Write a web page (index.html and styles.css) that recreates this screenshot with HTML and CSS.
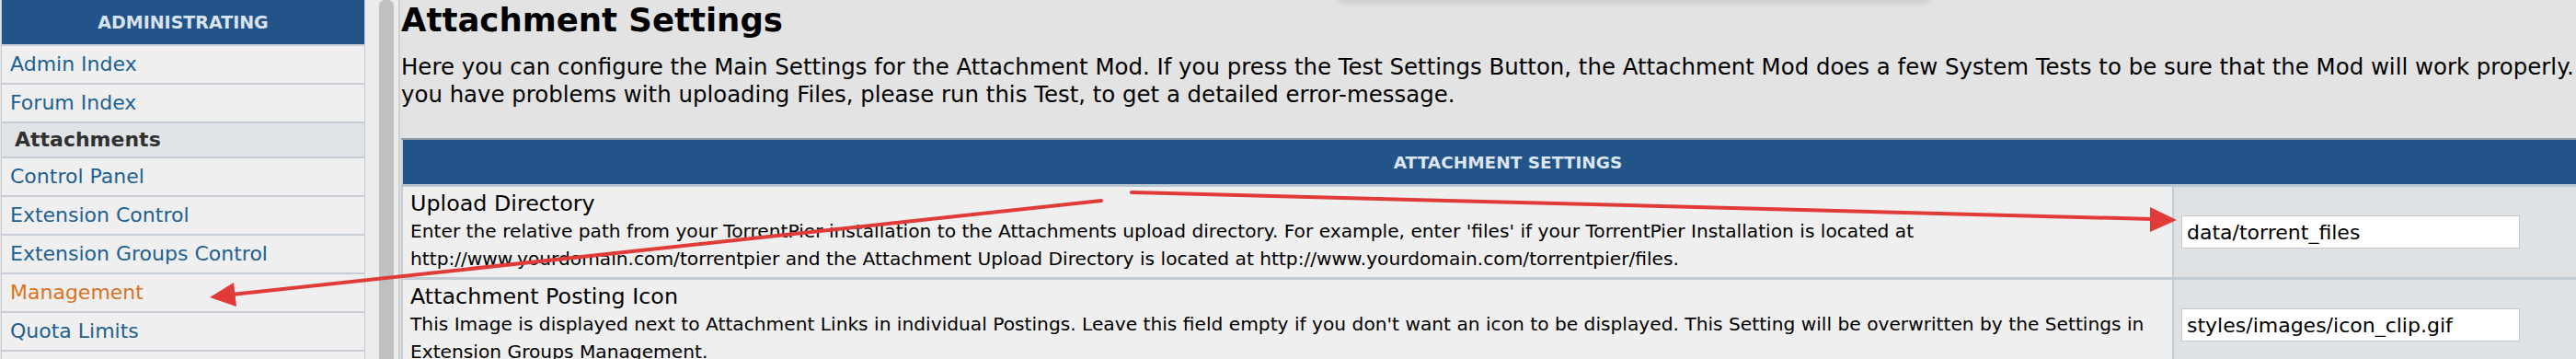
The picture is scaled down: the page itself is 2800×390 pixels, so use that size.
FILE: index.html
```html
<!DOCTYPE html>
<html lang="en">
<head>
<meta charset="utf-8">
<title>Attachment Settings</title>
<link rel="stylesheet" href="styles.css">
</head>
<body>
<div class="page">
  <aside class="sidebar">
    <div class="side-head">ADMINISTRATING</div>
    <a class="side-link" href="#">Admin Index</a>
    <a class="side-link" href="#">Forum Index</a>
    <div class="side-cat">Attachments</div>
    <a class="side-link" href="#">Control Panel</a>
    <a class="side-link" href="#">Extension Control</a>
    <a class="side-link" href="#">Extension Groups Control</a>
    <a class="side-link active" href="#">Management</a>
    <a class="side-link" href="#">Quota Limits</a>
    <div class="side-row"></div>
  </aside>
  <div class="gutter"><div class="gutter-bar"></div></div>
  <main class="main">
    <h1 class="title">Attachment Settings</h1>
    <p class="intro">Here you can configure the Main Settings for the Attachment Mod. If you press the Test Settings Button, the Attachment Mod does a few System Tests to be sure that the Mod will work properly. If<br>you have problems with uploading Files, please run this Test, to get a detailed error-message.</p>
    <table class="forumline">
      <tr><th colspan="2">ATTACHMENT SETTINGS</th></tr>
      <tr>
        <td class="row1">
          <div class="label">Upload Directory</div>
          <div class="desc">Enter the relative path from your TorrentPier installation to the Attachments upload directory. For example, enter 'files' if your TorrentPier Installation is located at<br>http://www.yourdomain.com/torrentpier and the Attachment Upload Directory is located at http://www.yourdomain.com/torrentpier/files.</div>
        </td>
        <td class="row2"><input class="post" type="text" value="data/torrent_files"></td>
      </tr>
      <tr>
        <td class="row1">
          <div class="label">Attachment Posting Icon</div>
          <div class="desc">This Image is displayed next to Attachment Links in individual Postings. Leave this field empty if you don't want an icon to be displayed. This Setting will be overwritten by the Settings in<br>Extension Groups Management.</div>
        </td>
        <td class="row2"><input class="post" type="text" value="styles/images/icon_clip.gif"></td>
      </tr>
    </table>
  </main>
  <div class="menu-shadow"></div>
  <svg class="arrows" width="2800" height="390" viewBox="0 0 2800 390">
    <line x1="1197" y1="218" x2="252" y2="320" stroke="#e03b39" stroke-width="4" stroke-linecap="round"/>
    <polygon points="228,323 254,307 257,333" fill="#e03b39"/>
    <line x1="1230" y1="209" x2="2340" y2="238" stroke="#e03b39" stroke-width="4" stroke-linecap="round"/>
    <polygon points="2366,239 2337,225 2337,252" fill="#e03b39"/>
  </svg>
</div>
</body>
</html>
```
FILE: styles.css
```css
html, body {
  margin: 0;
  padding: 0;
  width: 2800px;
  height: 390px;
  overflow: hidden;
  background: #e3e3e3;
}

.page {
  position: relative;
  display: flex;
  align-items: flex-start;
  width: 2800px;
  height: 390px;
  overflow: hidden;
  background: #e3e3e3;
}

/* ---------- sidebar ---------- */
.sidebar {
  flex: 0 0 394px;
  margin-left: 1px;
  height: 390px;
  border-left: 1px solid #c6cdd4;
  border-right: 1px solid #c6cdd4;
  background: #efefef;
  font-family: "DejaVu Sans", Verdana, sans-serif;
}

.side-head {
  height: 48px;
  line-height: 48px;
  background: #225389;
  color: #d9e3ee;
  font-size: 19px;
  font-weight: bold;
  text-align: center;
  border-bottom: 2px solid #c6cdd4;
}

.side-link {
  display: block;
  height: 40px;
  line-height: 40px;
  padding-left: 9px;
  font-size: 22px;
  color: #1d6194;
  text-decoration: none;
  border-bottom: 2px solid #c6cdd4;
  white-space: nowrap;
}

.side-link.active {
  color: #d9731f;
}

.side-cat {
  height: 36px;
  line-height: 36px;
  padding-left: 14px;
  font-size: 22px;
  font-weight: bold;
  color: #303030;
  background: #e1e4e7;
  border-bottom: 2px solid #c6cdd4;
}

.side-row {
  height: 40px;
}

/* ---------- gutter between frames ---------- */
.gutter {
  flex: 0 0 21px;
  height: 390px;
  padding-left: 15px;
  background: #ececec;
  border-right: 2px solid #d0d0d0;
  display: flex;
}

.gutter-bar {
  width: 16px;
  height: 392px;
  background: #c0c0c0;
  border-radius: 6px 6px 0 0;
}

/* ---------- main ---------- */
.main {
  flex: 0 0 2406px;
  padding-left: 1px;
  font-family: "DejaVu Sans", Tahoma, sans-serif;
  color: #000;
}

.title {
  margin: 0;
  font-size: 35.5px;
  line-height: 44px;
  font-weight: bold;
  white-space: nowrap;
}

.intro {
  margin: 14px 0 32px 0;
  font-size: 24.43px;
  line-height: 30px;
  white-space: nowrap;
}

.forumline {
  width: 2404px;
  border-collapse: collapse;
  border-top: 2px solid #8f9ca6;
  border-left: 2px solid #c8ced4;
}

.forumline th {
  height: 48px;
  padding: 0;
  background: #225389;
  color: #dbe5ef;
  font-size: 18.5px;
  font-weight: bold;
  text-align: center;
  border-bottom: 3px solid #b9c7d4;
}

.forumline td {
  padding: 0;
  vertical-align: middle;
  border-bottom: 3px solid #c3cbd2;
}

.row1 {
  width: 1907px;
  background: #efefef;
  padding: 4px 8px 5px 8px !important;
  vertical-align: top !important;
}

.label {
  font-size: 23.8px;
  line-height: 29px;
  white-space: nowrap;
}

.desc {
  font-size: 20.2px;
  line-height: 30px;
  white-space: nowrap;
}

.row2 {
  background: #dfe2e5;
  border-left: 2px solid #c3cbd2;
  padding-left: 8px !important;
}

.post {
  display: block;
  box-sizing: border-box;
  width: 368px;
  height: 36px;
  margin: 0;
  padding: 0 5px;
  border: 1px solid #c9c9c9;
  background: #fff;
  font-family: "DejaVu Sans", Verdana, sans-serif;
  font-size: 22px;
  color: #000;
}

/* ---------- overlays ---------- */
.menu-shadow {
  position: absolute;
  left: 1456px;
  top: -20px;
  width: 640px;
  height: 20px;
  background: #e3e3e3;
  box-shadow: 0 2px 8px rgba(0, 0, 0, 0.14);
}

.arrows {
  position: absolute;
  left: 0;
  top: 0;
  pointer-events: none;
}
```
